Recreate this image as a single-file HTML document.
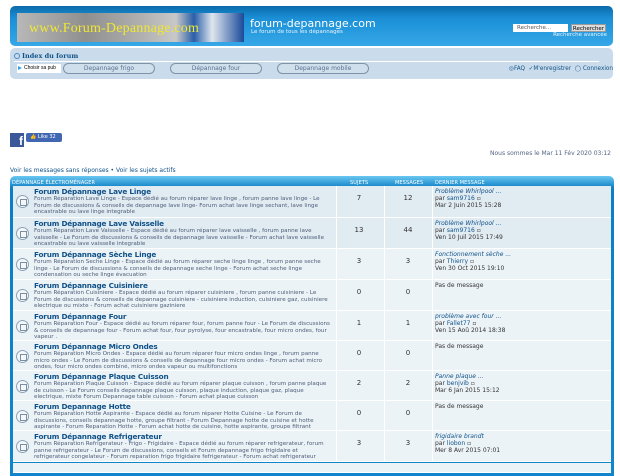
<!DOCTYPE html>
<html><head><meta charset="utf-8"><style>
*{box-sizing:border-box;margin:0;padding:0}
body{width:620px;height:466px;overflow:hidden;background:#fff;font-family:"DejaVu Sans","Liberation Sans",sans-serif;position:relative;color:#536482}
.a{position:absolute}
#hd{left:10px;top:6px;width:603px;height:40px;background:linear-gradient(#0b6aaa,#1b8fd6 30%,#36a8e8);border-radius:5px}
#logo{left:17px;top:13px;width:227px;height:29px;background:linear-gradient(90deg,#b8b8b8,#8f8f8f 30%,#b0b0b0 55%,#c8c8c8 70%,#2a5fa8 78%,#dfe6ee 86%,#1a4a9a);overflow:hidden}
#logo span{position:absolute;left:12px;top:8px;font-family:"Liberation Serif",serif;font-size:14px;color:#f0e830;letter-spacing:.2px;white-space:nowrap}
#nav{left:10px;top:48px;width:603px;height:31px;background:#cadceb;border-radius:5px}
.pill{top:63px;height:11px;border:1px solid #7c93a8;border-radius:6px;font-size:6px;color:#5a7290;text-align:center;line-height:9px;background:#cfdfec}
#tbl{left:10px;top:176px;width:604px;height:300px;background:linear-gradient(#6ac8f2,#0c7fc4 12px,#1284cb);border-radius:5px 5px 0 0}
.th{top:180px;font-size:5px;color:#fff;letter-spacing:.1px}
.row{position:absolute;left:13px;width:598px;border-bottom:1px solid #fff}
.row.o{background:#e1ebf2}.row.e{background:#ecf3f7}
.ic{position:absolute;left:3px;width:13px;height:13px;border-radius:50%;border:1px solid #8aa3b8;background:#f4f7fa}
.ic:after{content:"";position:absolute;left:3px;top:3px;width:5px;height:5px;border:1px solid #7b8fa0}
.t{position:absolute;left:21px;top:1px;font-size:7.3px;font-weight:bold;color:#105289;white-space:nowrap;letter-spacing:-.2px}
.d{position:absolute;left:21px;top:10px;width:300px;font-size:5.6px;line-height:6.6px;color:#4c5d77}
.c1,.c2{position:absolute;top:8px;font-size:7px;width:40px;text-align:center;color:#333}
.c1{left:326px}.c2{left:375px}
.sep{position:absolute;top:0;bottom:0;width:1px;background:#fff}
.l{position:absolute;left:422px;top:2px;font-size:6px;line-height:7px;color:#333}
.l i{color:#105289}.l b{font-weight:normal;color:#105289}
</style></head><body>
<div id="hd" class="a"></div>
<div id="logo" class="a"><span>www.Forum-Depannage.com</span></div>
<div class="a" style="left:250px;top:17px;font-size:11px;color:#fff">forum-depannage.com</div>
<div class="a" style="left:251px;top:29px;font-size:5.5px;color:#eaf4fb">Le forum de tous les dépannages</div>
<div class="a" style="left:513px;top:24px;width:55px;height:8px;background:#fff;font-size:5.5px;color:#555;padding-left:4px;line-height:8px">Recherche…</div>
<div class="a" style="left:571px;top:24px;width:35px;height:8px;background:#ddd;font-size:5.5px;color:#000;text-align:center;line-height:8px;border:1px solid #999">Rechercher</div>
<div class="a" style="right:13px;top:32px;font-size:5.5px;color:#e8f4ff">Recherche avancée</div>
<div id="nav" class="a"></div>
<div class="a" style="left:14px;top:53px;width:6px;height:6px;border:1px solid #4a86c0;border-radius:50%"></div>
<div class="a" style="left:22px;top:52px;font-size:6.5px;font-weight:bold;color:#105289;font-family:'DejaVu Serif',serif">Index du forum</div>
<div class="a" style="left:14px;top:61px;width:585px;height:1px;background:#fff"></div>
<div class="a" style="left:17px;top:64px;width:44px;height:9px;background:#fff;font-size:5px;line-height:9px;color:#000;padding-left:7px;font-family:'Liberation Sans'">Choisir sa pub</div>
<div class="a" style="left:18px;top:66px;border-left:4px solid #38a0e8;border-top:2.5px solid transparent;border-bottom:2.5px solid transparent"></div>
<div class="a pill" style="left:63px;width:92px">Depannage frigo</div>
<div class="a pill" style="left:170px;width:92px">Dépannage four</div>
<div class="a pill" style="left:277px;width:92px">Depannage mobile</div>
<div class="a" style="right:7px;top:66px;font-size:5.7px;color:#105289;white-space:nowrap">◎FAQ &nbsp;✓M'enregistrer &nbsp;◯ Connexion</div>
<div class="a" style="left:10px;top:133px;width:14px;height:14px;background:#3b5998;color:#fff;font:bold 12px 'Liberation Sans';text-align:right;padding-right:1px;line-height:16px;overflow:hidden">f</div>
<div class="a" style="left:26px;top:133px;width:36px;height:9px;background:#4267b2;border-radius:2px;color:#fff;font-size:5px;line-height:9px;padding-left:4px">👍 Like 32</div>
<div class="a" style="right:9px;top:150px;font-size:6px;color:#536482">Nous sommes le Mar 11 Fév 2020 03:12</div>
<div class="a" style="left:10px;top:167px;font-size:6px;color:#105289">Voir les messages sans réponses • Voir les sujets actifs</div>
<div id="tbl" class="a"></div>
<div class="a th" style="left:12px">DÉPANNAGE ÉLECTROMÉNAGER</div>
<div class="a th" style="left:350px">SUJETS</div>
<div class="a th" style="left:395px">MESSAGES</div>
<div class="a th" style="left:435px">DERNIER MESSAGE</div>

<div class="row o" style="top:186px;height:32px"><div class="ic" style="top:9px"></div><div class="t">Forum Dépannage Lave Linge</div><div class="d">Forum Réparation Lave Linge - Espace dédié au forum réparer lave linge , forum panne lave linge - Le Forum de discussions &amp; conseils de depannage lave linge- Forum achat lave linge sechant, lave linge encastrable ou lave linge integrable</div><div class="sep" style="left:323px"></div><div class="sep" style="left:371px"></div><div class="sep" style="left:419px"></div><div class="c1">7</div><div class="c2">12</div><div class="l"><i>Problème Whirlpool ...</i><br>par <b>sam9716</b> ▫<br>Mar 2 Juin 2015 15:28</div></div>
<div class="row o" style="top:218px;height:31px"><div class="ic" style="top:9px"></div><div class="t">Forum Dépannage Lave Vaisselle</div><div class="d">Forum Réparation Lave Vaisselle - Espace dédié au forum réparer lave vaisselle , forum panne lave vaisselle - Le Forum de discussions &amp; conseils de depannage lave vaisselle - Forum achat lave vaisselle encastrable ou lave vaisselle integrable</div><div class="sep" style="left:323px"></div><div class="sep" style="left:371px"></div><div class="sep" style="left:419px"></div><div class="c1">13</div><div class="c2">44</div><div class="l"><i>Problème Whirlpool ...</i><br>par <b>sam9716</b> ▫<br>Ven 10 Juil 2015 17:49</div></div>
<div class="row e" style="top:249px;height:31px"><div class="ic" style="top:9px"></div><div class="t">Forum Dépannage Sèche Linge</div><div class="d">Forum Réparation Seche Linge - Espace dédié au forum réparer seche linge linge , forum panne seche linge - Le Forum de discussions &amp; conseils de depannage seche linge - Forum achat seche linge condensation ou seche linge évacuation</div><div class="sep" style="left:323px"></div><div class="sep" style="left:371px"></div><div class="sep" style="left:419px"></div><div class="c1">3</div><div class="c2">3</div><div class="l"><i>Fonctionnement sèche ...</i><br>par <b>Thierry</b> ▫<br>Ven 30 Oct 2015 19:10</div></div>
<div class="row e" style="top:280px;height:31px"><div class="ic" style="top:9px"></div><div class="t">Forum Dépannage Cuisiniere</div><div class="d">Forum Réparation Cuisiniere - Espace dédié au forum réparer cuisiniere , forum panne cuisiniere - Le Forum de discussions &amp; conseils de depannage cuisiniere - cuisiniere induction, cuisiniere gaz, cuisiniere electrique ou mixte - Forum achat cuisiniere gaziniere</div><div class="sep" style="left:323px"></div><div class="sep" style="left:371px"></div><div class="sep" style="left:419px"></div><div class="c1">0</div><div class="c2">0</div><div class="l">Pas de message</div></div>
<div class="row e" style="top:311px;height:30px"><div class="ic" style="top:9px"></div><div class="t">Forum Dépannage Four</div><div class="d">Forum Réparation Four - Espace dédié au forum réparer four, forum panne four - Le Forum de discussions &amp; conseils de depannage four - Forum achat four, four pyrolyse, four encastrable, four micro ondes, four vapeur .</div><div class="sep" style="left:323px"></div><div class="sep" style="left:371px"></div><div class="sep" style="left:419px"></div><div class="c1">1</div><div class="c2">1</div><div class="l"><i>problème avec four ...</i><br>par <b>Fallet77</b> ▫<br>Ven 15 Aoû 2014 18:38</div></div>
<div class="row e" style="top:341px;height:30px"><div class="ic" style="top:9px"></div><div class="t">Forum Dépannage Micro Ondes</div><div class="d">Forum Réparation Micro Ondes - Espace dédié au forum réparer four micro ondes linge , forum panne micro ondes - Le Forum de discussions &amp; conseils de depannage four micro ondes - Forum achat micro ondes, four micro ondes combiné, micro ondes vapeur ou multifonctions</div><div class="sep" style="left:323px"></div><div class="sep" style="left:371px"></div><div class="sep" style="left:419px"></div><div class="c1">0</div><div class="c2">0</div><div class="l">Pas de message</div></div>
<div class="row e" style="top:371px;height:30px"><div class="ic" style="top:9px"></div><div class="t">Forum Dépannage Plaque Cuisson</div><div class="d">Forum Réparation Plaque Cuisson - Espace dédié au forum réparer plaque cuisson , forum panne plaque de cuisson - Le Forum conseils depannage plaque cuisson, plaque induction, plaque gaz, plaque electrique, mixte Forum Depannage table cuisson - Forum achat plaque cuisson</div><div class="sep" style="left:323px"></div><div class="sep" style="left:371px"></div><div class="sep" style="left:419px"></div><div class="c1">2</div><div class="c2">2</div><div class="l"><i>Panne plaque ...</i><br>par <b>benjvib</b> ▫<br>Mar 6 Jan 2015 15:12</div></div>
<div class="row e" style="top:401px;height:30px"><div class="ic" style="top:9px"></div><div class="t">Forum Depannage Hotte</div><div class="d">Forum Réparation Hotte Aspirante - Espace dédié au forum réparer Hotte Cuisine - Le Forum de discussions, conseils depannage hotte, groupe filtrant - Forum Depannage hotte de cuisine et hotte aspirante - Forum Reparation Hotte - Forum achat hotte de cuisine, hotte aspirante, groupe filtrant</div><div class="sep" style="left:323px"></div><div class="sep" style="left:371px"></div><div class="sep" style="left:419px"></div><div class="c1">0</div><div class="c2">0</div><div class="l">Pas de message</div></div>
<div class="row e" style="top:431px;height:31px"><div class="ic" style="top:9px"></div><div class="t">Forum Dépannage Refrigerateur</div><div class="d">Forum Réparation Refrigerateur - Frigo - Frigidaire - Espace dédié au forum réparer refrigerateur, forum panne refrigerateur - Le Forum de discussions, conseils et Forum depannage frigo frigidaire et refrigerateur congelateur - Forum reparation frigo frigidaire fefrigerateur - Forum achat refrigerateur</div><div class="sep" style="left:323px"></div><div class="sep" style="left:371px"></div><div class="sep" style="left:419px"></div><div class="c1">3</div><div class="c2">3</div><div class="l"><i>frigidaire brandt</i><br>par <b>liobon</b> ▫<br>Mer 8 Avr 2015 07:01</div></div>
<div class="row e" style="top:463px;height:10px"></div>
</body></html>
